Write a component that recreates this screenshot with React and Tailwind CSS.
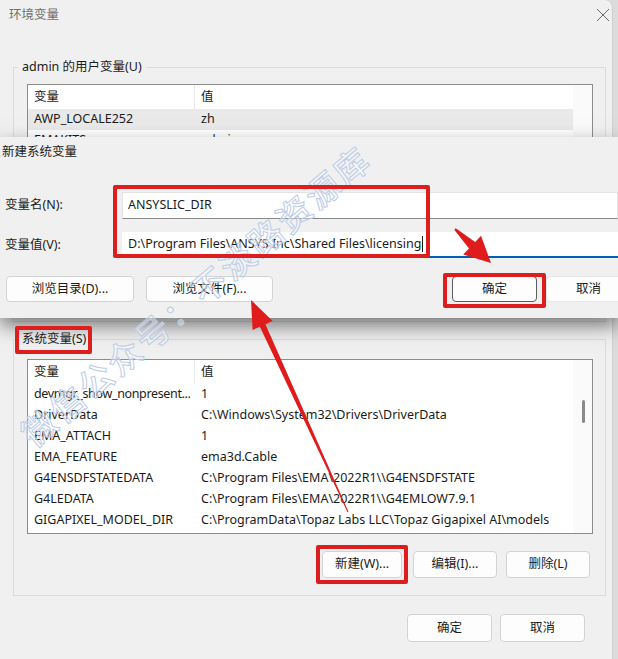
import React from "react";

const userRows = [
  ["AWP_LOCALE252", "zh"],
  ["EMAKITS", "admin"],
  ["OneDrive", "C:\\Users\\admin\\OneDrive"],
  ["Path", "C:\\Users\\admin\\AppData\\Local\\Microsoft\\WindowsApps"],
  ["TEMP", "C:\\Users\\admin\\AppData\\Local\\Temp"],
  ["TMP", "C:\\Users\\admin\\AppData\\Local\\Temp"],
];

const sysRows = [
  ["devmgr_show_nonpresent...", "1"],
  ["DriverData", "C:\\Windows\\System32\\Drivers\\DriverData"],
  ["EMA_ATTACH", "1"],
  ["EMA_FEATURE", "ema3d.Cable"],
  ["G4ENSDFSTATEDATA", "C:\\Program Files\\EMA\\2022R1\\\\G4ENSDFSTATE"],
  ["G4LEDATA", "C:\\Program Files\\EMA\\2022R1\\\\G4EMLOW7.9.1"],
  ["GIGAPIXEL_MODEL_DIR", "C:\\ProgramData\\Topaz Labs LLC\\Topaz Gigapixel AI\\models"],
];

// 箭头多边形：尾部细、头部三角
function arrowPoints(x1, y1, x2, y2, headLen, headW, tailW, neckW) {
  const dx = x2 - x1;
  const dy = y2 - y1;
  const len = Math.hypot(dx, dy);
  const ux = dx / len;
  const uy = dy / len;
  const px = -uy;
  const py = ux;
  const bx = x2 - ux * headLen;
  const by = y2 - uy * headLen;
  const pts = [
    [x1 + (px * tailW) / 2, y1 + (py * tailW) / 2],
    [bx + (px * neckW) / 2, by + (py * neckW) / 2],
    [bx + (px * headW) / 2, by + (py * headW) / 2],
    [x2, y2],
    [bx - (px * headW) / 2, by - (py * headW) / 2],
    [bx - (px * neckW) / 2, by - (py * neckW) / 2],
    [x1 - (px * tailW) / 2, y1 - (py * tailW) / 2],
  ];
  return pts.map((p) => p.map((n) => n.toFixed(1)).join(",")).join(" ");
}

function Btn({ children, className = "" }) {
  return (
    <button
      className={`shrink-0 flex items-center justify-center rounded-[4px] border bg-[#fdfdfd] ${className}`}
    >
      {children}
    </button>
  );
}

function VarList({ rows, selected, className = "", thumb }) {
  return (
    <div className={`flex overflow-hidden border border-[#8c8c8c] bg-white ${className}`}>
      <div className="flex flex-1 flex-col">
        <div className="flex h-[24px] shrink-0 items-center">
          <div className="flex h-full w-[167px] items-center border-r border-[#e8e8e8] pl-[6px]">变量</div>
          <div className="pl-[6px]">值</div>
        </div>
        {rows.map(([k, v], i) => (
          <div
            key={k}
            className={`flex h-[21px] shrink-0 items-center ${i === selected ? "bg-[#e9e9e9]" : ""}`}
          >
            <div
              className={`w-[167px] overflow-hidden whitespace-nowrap pl-[6px] ${
                k.endsWith("...") ? "tracking-[-0.35px]" : ""
              }`}
            >
              {k}
            </div>
            <div className="overflow-hidden whitespace-nowrap pl-[6px]">{v}</div>
          </div>
        ))}
      </div>
      <div className="w-[19px] shrink-0 bg-[#fafafa]">
        {thumb && <div className="ml-[9px] mt-[40px] h-[23px] w-[3px] rounded-full bg-[#8a8a8a]" />}
      </div>
    </div>
  );
}

export default function App() {
  return (
    <div className="relative h-[659px] w-[618px] overflow-hidden bg-[#dcdcdc] font-['Noto_Sans','Noto_Sans_CJK_SC',sans-serif] text-[12.5px] text-[#1b1b1b]">
      {/* 环境变量 主窗口 */}
      <div className="flex h-full w-[613px] flex-col rounded-tr-[8px] border-r border-[#cfcfcf] bg-[#f0f0f0]">
        <div className="flex h-[30px] shrink-0 items-center justify-between pl-[9px] text-[#6f6f6f]">
          <span>环境变量</span>
          <svg width="22" height="22" viewBox="0 0 22 22" className="text-[#6a6a6a]">
            <path d="M7 5 L19 17 M19 5 L7 17" stroke="currentColor" strokeWidth="1" fill="none" />
          </svg>
        </div>

        <fieldset className="ml-[13px] mt-[28px] h-[264px] w-[593px] shrink-0 border border-[#dcdcdc] pl-[13px] pr-[12px]">
          <legend className="-ml-[9px] px-[4px] leading-[18px]">admin 的用户变量(U)</legend>
          <VarList rows={userRows} selected={0} className="mt-[8px] h-[200px]" />
        </fieldset>

        <fieldset className="ml-[13px] mt-[8px] h-[266px] w-[593px] shrink-0 border border-[#dcdcdc] pl-[13px] pr-[12px]">
          <legend className="-ml-[9px] px-[4px] leading-[18px]">系统变量(S)</legend>
          <VarList rows={sysRows} className="mt-[11px] h-[175px]" thumb />
          <div className="mt-[17px] flex justify-end pr-[3px]">
            <Btn className="h-[27px] w-[80px] border-[#d3d3d3]">新建(W)...</Btn>
            <Btn className="ml-[11px] h-[27px] w-[84px] border-[#d3d3d3]">编辑(I)...</Btn>
            <Btn className="ml-[9px] h-[27px] w-[84px] border-[#d3d3d3]">删除(L)</Btn>
          </div>
        </fieldset>

        <div className="mt-[18px] flex justify-end pr-[27px]">
          <Btn className="h-[28px] w-[85px] border-[#d3d3d3]">确定</Btn>
          <Btn className="ml-[8px] h-[28px] w-[85px] border-[#d3d3d3]">取消</Btn>
        </div>
      </div>

      {/* 新建系统变量 对话框 */}
      <div className="absolute left-0 top-[137px] flex h-[181px] w-[618px] flex-col bg-[#f0f0f0] shadow-[0_8px_18px_rgba(0,0,0,0.5)]">
        <div className="flex h-[30px] shrink-0 items-center pl-[2px]">新建系统变量</div>
        <div className="mt-[25px] flex h-[27px] shrink-0 items-center">
          <span className="w-[122px] shrink-0 pl-[5px]">变量名(N):</span>
          <div className="flex h-full flex-1 items-center border border-b-[#8a8a8a] border-[#e3e3e3] bg-white pl-[5px]">
            ANSYSLIC_DIR
          </div>
        </div>
        <div className="mt-[13px] flex h-[26px] shrink-0 items-center">
          <span className="w-[122px] shrink-0 pl-[5px]">变量值(V):</span>
          <div className="flex h-full flex-1 items-center border-b-2 border-[#005fb8] bg-white pl-[6px]">
            <span>D:\Program Files\ANSYS Inc\Shared Files\licensing</span>
            <span className="ml-[1px] h-[16px] w-px bg-[#1b1b1b]" />
          </div>
        </div>
        <div className="mt-[18px] flex h-[26px] shrink-0">
          <Btn className="ml-[6px] w-[128px] border-[#d3d3d3]">浏览目录(D)...</Btn>
          <Btn className="ml-[12px] w-[127px] border-[#d3d3d3]">浏览文件(F)...</Btn>
          <Btn className="ml-[179px] w-[85px] border-[#5c5c5c]">确定</Btn>
          <Btn className="ml-[9px] w-[85px] border-[#e6e6e6] bg-[#f7f7f7]">取消</Btn>
        </div>
      </div>

      {/* 水印 */}
      <div className="pointer-events-none absolute left-[195px] top-[295px] -translate-x-1/2 -translate-y-1/2 rotate-[-40deg] whitespace-nowrap text-[34px] font-medium tracking-[3px] text-white/40 [-webkit-text-stroke:1px_#bccbe8] font-['Noto_Sans_CJK_SC',sans-serif]">
        微信公众号：不淡路资源库
      </div>

      {/* 红色标注框 */}
      <div className="pointer-events-none absolute left-[113px] top-[185px] h-[73px] w-[317px] rounded-[2px] border-[4px] border-[#dc1e1e]" />
      <div className="pointer-events-none absolute left-[443px] top-[273px] h-[35px] w-[103px] rounded-[2px] border-[4px] border-[#dc1e1e]" />
      <div className="pointer-events-none absolute left-[15px] top-[326px] h-[28px] w-[77px] rounded-[2px] border-[4px] border-[#dc1e1e]" />
      <div className="pointer-events-none absolute left-[316px] top-[545px] h-[39px] w-[92px] rounded-[2px] border-[4px] border-[#dc1e1e]" />

      {/* 红色箭头 */}
      <svg className="pointer-events-none absolute left-0 top-0" width="618" height="659">
        <polygon points={arrowPoints(348, 512, 251, 300, 28, 22, 1, 6)} fill="#e01b1b" />
        <polygon points={arrowPoints(455, 229, 491, 263, 26, 26, 2, 9)} fill="#e01b1b" />
      </svg>
    </div>
  );
}
